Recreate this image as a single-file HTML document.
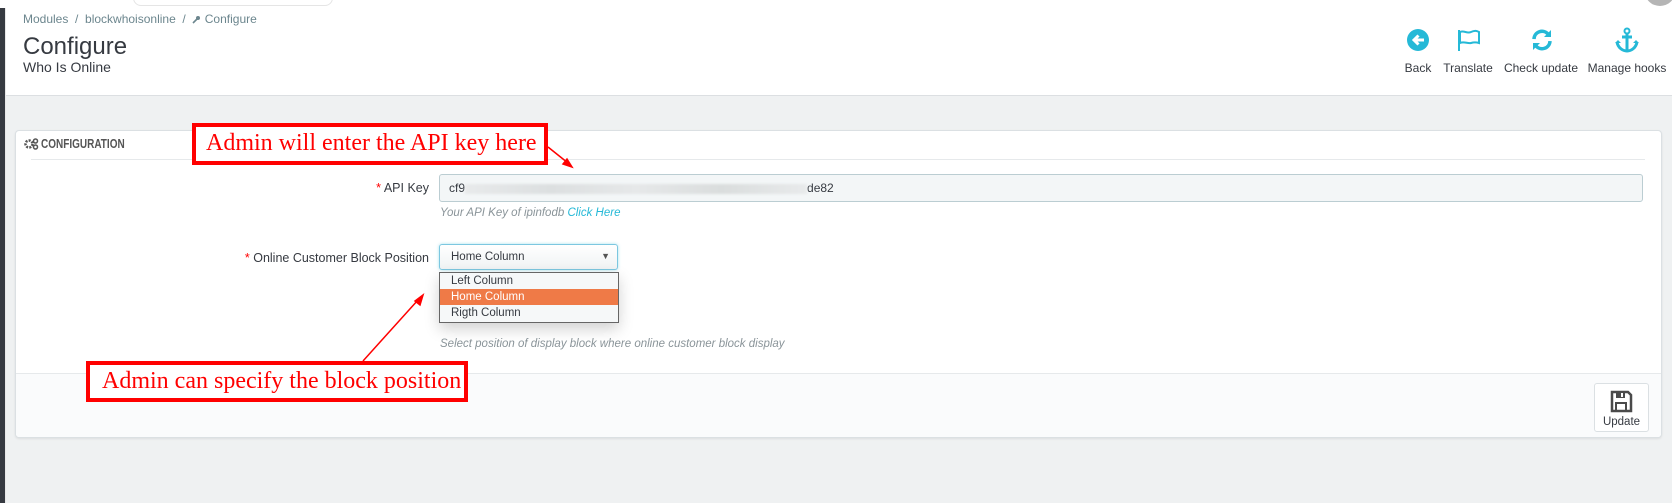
<!DOCTYPE html>
<html><head><meta charset="utf-8"><style>
*{margin:0;padding:0;box-sizing:border-box}
body{width:1672px;height:503px;overflow:hidden;background:#eff1f2;font-family:"Liberation Sans",sans-serif;color:#363a41;position:relative}
.abs{position:absolute}
#hdr{left:0;top:0;width:1672px;height:96px;background:#fff;border-bottom:1px solid #dcdfe2}
#strip{left:0;top:8px;width:5px;height:495px;background:#363a41}
.bc{left:23px;top:12px;font-size:12px;color:#6c868e}
.tb{font-size:12px;color:#363a41;text-align:center;width:100px;margin-left:-50px}
#panel{left:15px;top:130px;width:1647px;height:308px;background:#fff;border:1px solid #dbe0e3;border-radius:4px;box-shadow:0 1px 2px rgba(0,0,0,.08);overflow:hidden}
.red{border:4px solid #f00;background:#fff;color:#f00;font-family:"Liberation Serif",serif;font-size:24px;white-space:nowrap}
.lbl{font-size:12.5px;color:#363a41;text-align:right}
.lbl b{color:#f00;font-weight:normal}
.help{font-size:11.5px;color:#8a9499;font-style:italic}
</style></head><body>
<div id="hdr" class="abs"></div>
<div class="abs" style="left:133px;top:-10px;width:200px;height:16px;border:1px solid #e5e5e5;border-radius:8px"></div>
<div class="abs" style="left:1645px;top:-22px;width:30px;height:28px;border-radius:50%;background:#b5b5b5"></div>
<div id="strip" class="abs"></div>
<div class="abs" style="left:5px;top:8px;width:1px;height:495px;background:#e8e8e8"></div>
<div class="abs bc">Modules &nbsp;/&nbsp; blockwhoisonline &nbsp;/&nbsp; <svg width="9" height="9" viewBox="0 0 9 9" style="vertical-align:-1px"><path d="M1 8l4-4" stroke="#6c868e" stroke-width="1.6"/><circle cx="6" cy="3" r="2" fill="#6c868e"/></svg> Configure</div>
<div class="abs" style="left:23px;top:33px;font-size:24px;color:#363a41">Configure</div>
<div class="abs" style="left:23px;top:59px;font-size:14px;color:#363a41">Who Is Online</div>

<svg class="abs" style="left:1406px;top:28px" width="24" height="24" viewBox="0 0 24 24"><circle cx="12" cy="12" r="11" fill="#25b9d7"/><path d="M18 12H9M12.5 7.5L8 12l4.5 4.5" stroke="#fff" stroke-width="3" fill="none"/></svg>
<svg class="abs" style="left:1456px;top:28px" width="26" height="24" viewBox="0 0 26 24"><path d="M3 2v21" stroke="#25b9d7" stroke-width="2"/><path d="M4 4c4-2 7 2 11 0s6-1 8 0v11c-3-1-5-1-8 0s-7-2-11 0z" stroke="#25b9d7" stroke-width="2" fill="none"/></svg>
<svg class="abs" style="left:1530px;top:28px" width="24" height="24" viewBox="0 0 24 24"><path d="M4 11a8 8 0 0 1 14-5" stroke="#25b9d7" stroke-width="3.5" fill="none"/><path d="M21 2v7h-7z" fill="#25b9d7"/><path d="M20 13a8 8 0 0 1-14 5" stroke="#25b9d7" stroke-width="3.5" fill="none"/><path d="M3 22v-7h7z" fill="#25b9d7"/></svg>
<svg class="abs" style="left:1614px;top:27px" width="26" height="26" viewBox="0 0 26 26"><circle cx="13" cy="4" r="2.5" stroke="#25b9d7" stroke-width="2" fill="none"/><path d="M13 7v17M8 10h10" stroke="#25b9d7" stroke-width="3"/><path d="M3 15c1 6 6 9 10 9s9-3 10-9" stroke="#25b9d7" stroke-width="3" fill="none"/><path d="M1 16l3-3 3 3zM19 16l3-3 3 3z" fill="#25b9d7"/></svg>
<div class="abs tb" style="left:1418px;top:61px">Back</div>
<div class="abs tb" style="left:1468px;top:61px">Translate</div>
<div class="abs tb" style="left:1541px;top:61px">Check update</div>
<div class="abs tb" style="left:1627px;top:61px">Manage hooks</div>

<div id="panel" class="abs">
  <div class="abs" style="left:0;top:242px;width:1647px;height:66px;background:#fafbfc;border-top:1px solid #e6e9eb"></div>
  <div class="abs" style="left:15px;top:28px;width:1614px;height:1px;background:#e6e9eb"></div>
</div>
<svg class="abs" style="left:24px;top:138px" width="15" height="12" viewBox="0 0 15 12"><circle cx="5" cy="6" r="3.5" stroke="#555" stroke-width="2.5" fill="none" stroke-dasharray="2 1.2"/><circle cx="11.5" cy="3" r="2" stroke="#555" stroke-width="1.5" fill="none"/><circle cx="11.5" cy="9" r="2" stroke="#555" stroke-width="1.5" fill="none"/></svg>
<div class="abs" style="left:41px;top:137px;font-size:12.5px;font-weight:bold;color:#555;transform:scaleX(.8);transform-origin:left">CONFIGURATION</div>

<div class="abs lbl" style="left:200px;width:229px;top:181px"><b>*</b> API Key</div>
<div class="abs" style="left:439px;top:174px;width:1204px;height:28px;background:#f3f6f7;border:1px solid #bbcdd2;border-radius:3px;font-size:12px;padding:6px 0 0 9px;color:#363a41">cf9<span style="display:inline-block;width:342px;height:10px;background:linear-gradient(90deg,#e8eaeb,#dcdfe0,#e6e8e9,#dadddd,#e8eaeb);filter:blur(1px);vertical-align:middle"></span>de82</div>
<div class="abs help" style="left:440px;top:207px">Your API Key of ipinfodb <span style="color:#25b9d7">Click Here</span></div>

<div class="abs lbl" style="left:200px;width:229px;top:251px"><b>*</b> Online Customer Block Position</div>
<div class="abs" style="left:439px;top:244px;width:179px;height:26px;background:linear-gradient(#fff,#f0f3f4);border:1px solid #7cc7e0;border-radius:3px;font-size:11.5px;padding:6px 0 0 11px;box-shadow:0 0 3px rgba(37,185,215,.4)">Home Column<span class="abs" style="right:7px;top:6px;font-size:9px;color:#555">&#9660;</span></div>
<div class="abs" style="left:439px;top:272px;width:180px;height:51px;background:#f6f8f9;border:1px solid #666;font-size:11.5px;box-shadow:0 6px 14px rgba(0,0,0,.18)">
  <div style="height:16px;padding:2px 0 0 11px">Left Column</div>
  <div style="height:16px;padding:2px 0 0 11px;background:#ef7a47;color:#fff">Home Column</div>
  <div style="height:16px;padding:2px 0 0 11px">Rigth Column</div>
</div>
<div class="abs help" style="left:440px;top:338px">Select position of display block where online customer block display</div>

<div class="abs" style="left:1594px;top:383px;width:55px;height:49px;background:#fff;border:1px solid #dbe0e3;border-radius:3px"></div>
<svg class="abs" style="left:1610px;top:390px" width="23" height="23" viewBox="0 0 23 23"><path d="M2 2h16l3 3v16H2z" stroke="#4a4a4a" stroke-width="2.5" fill="none"/><rect x="6" y="2" width="9" height="6" fill="#4a4a4a"/><rect x="11" y="3" width="2" height="4" fill="#fff"/><rect x="6" y="13" width="10" height="8" stroke="#4a4a4a" stroke-width="2" fill="none"/></svg>
<div class="abs" style="left:1594px;top:416px;width:55px;text-align:center;font-size:11.5px;color:#363a41">Update</div>

<div class="abs red" style="left:192px;top:123px;width:356px;height:42px;padding:3px 0 0 10px">Admin will enter the API key here</div>
<div class="abs red" style="left:86px;top:361px;width:382px;height:41px;padding:3px 0 0 12px">Admin can specify the block position</div>
<svg class="abs" style="left:0;top:0" width="1672" height="503"><g stroke="#f00" stroke-width="1.5" fill="#f00"><line x1="548" y1="147" x2="568" y2="163"/><path d="M572 167l-9-3 4-5z"/><line x1="363" y1="361" x2="418" y2="300"/><path d="M423 295l-3 10-5-4z"/></g></svg>
</body></html>
